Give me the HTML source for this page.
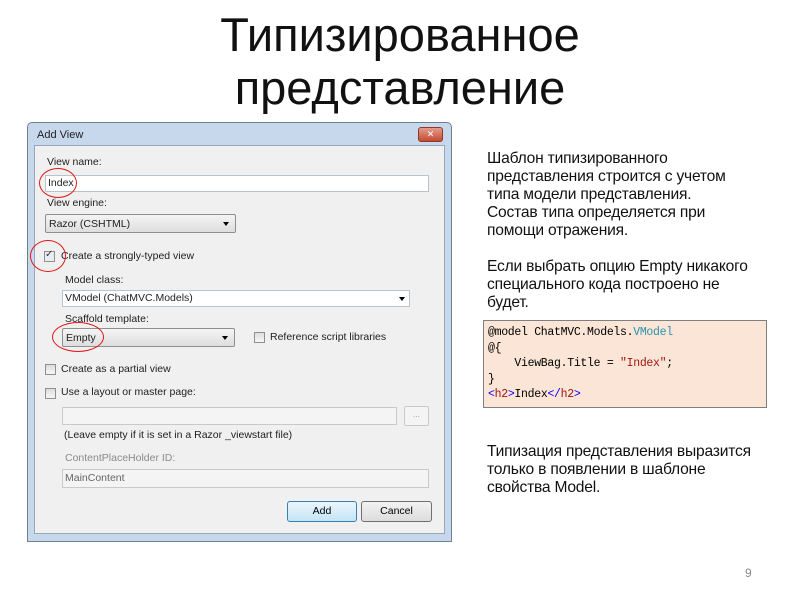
<!DOCTYPE html>
<html><head><meta charset="utf-8"><style>
body{margin:0;width:800px;height:600px;background:#fff;position:relative;overflow:hidden;font-family:"Liberation Sans","DejaVu Sans",sans-serif}
.a{position:absolute}
.t{font-size:15.6px;color:#111;line-height:18px;letter-spacing:-0.2px;white-space:nowrap}
.dlg{font-size:10.5px;color:#1e1e1e;white-space:nowrap}
.inp{background:#fff;border:1px solid #b9c3cc;box-sizing:border-box}
.cmb{background:linear-gradient(#f4f4f4,#dedede);border:1px solid #8e8f8f;border-radius:2px;box-sizing:border-box}
.arr{position:absolute;width:0;height:0;border-left:3px solid transparent;border-right:3px solid transparent;border-top:4px solid #000}
.cmb .arr{right:6px;top:7px}
.cb{width:11px;height:11px;border:1px solid #8f8f8f;background:linear-gradient(#ddd,#f6f6f6);box-sizing:border-box}
.circ{border:1.3px solid #e01818;border-radius:50%;box-sizing:border-box}
.btn{border:1px solid #707070;border-radius:3px;background:linear-gradient(#f2f2f2,#dcdcdc);box-sizing:border-box;text-align:center;font-size:10.5px;line-height:19px}
</style></head><body>
<div class="a" style="left:0;top:8px;width:800px;text-align:center;font-size:47px;line-height:53px;color:#111">Типизированное<br>представление</div>

<div class="a" style="left:27px;top:122px;width:425px;height:420px;background:#c7d8ec;border:1px solid #6d7f93;box-sizing:border-box;border-radius:5px 5px 0 0"></div>
<div class="a dlg" style="left:37px;top:129px;font-size:11px">Add View</div>
<div class="a" style="left:418px;top:127px;width:25px;height:15px;border-radius:3px;background:linear-gradient(#e59c8b,#c54a33);border:1px solid #8b3a2a;box-sizing:border-box;color:#fff;font-size:9px;text-align:center;line-height:13px">✕</div>
<div class="a" style="left:34px;top:145px;width:411px;height:389px;background:#f0f0f0;border:1px solid #98a8ba;box-sizing:border-box"></div>

<div class="a dlg" style="left:47px;top:156px">View name:</div>
<div class="a inp" style="left:45px;top:175px;width:384px;height:17px"></div>
<div class="a dlg" style="left:48px;top:177px">Index</div>
<div class="a circ" style="left:39px;top:168px;width:38px;height:30px"></div>
<div class="a dlg" style="left:47px;top:197px">View engine:</div>
<div class="a cmb" style="left:45px;top:214px;width:191px;height:19px"><span class="dlg" style="position:absolute;left:3px;top:3px">Razor (CSHTML)</span><i class="arr"></i></div>
<div class="a cb" style="left:44px;top:251px;background:#e8ecf2"></div>
<div class="a" style="left:45px;top:249px;font-size:10px;color:#333">✓</div>
<div class="a dlg" style="left:61px;top:250px">Create a strongly-typed view</div>
<div class="a circ" style="left:30px;top:240px;width:36px;height:32px"></div>
<div class="a dlg" style="left:65px;top:274px">Model class:</div>
<div class="a inp" style="left:62px;top:290px;width:348px;height:17px"></div>
<div class="a dlg" style="left:65px;top:292px">VModel (ChatMVC.Models)</div>
<i class="a arr" style="left:399px;top:297px"></i>
<div class="a dlg" style="left:65px;top:313px">Scaffold template:</div>
<div class="a cmb" style="left:62px;top:328px;width:173px;height:19px"><span class="dlg" style="position:absolute;left:3px;top:3px">Empty</span><i class="arr"></i></div>
<div class="a circ" style="left:52px;top:322px;width:52px;height:30px"></div>
<div class="a cb" style="left:254px;top:332px"></div>
<div class="a dlg" style="left:270px;top:331px">Reference script libraries</div>
<div class="a cb" style="left:45px;top:364px"></div>
<div class="a dlg" style="left:61px;top:363px">Create as a partial view</div>
<div class="a cb" style="left:45px;top:388px"></div>
<div class="a dlg" style="left:61px;top:386px">Use a layout or master page:</div>
<div class="a inp" style="left:62px;top:407px;width:335px;height:18px;background:#f4f4f4;border-color:#c9c9c9"></div>
<div class="a inp" style="left:404px;top:406px;width:25px;height:20px;background:#f4f4f4;border-color:#c9c9c9;border-radius:2px;font-size:8px;color:#999;text-align:center;line-height:16px">...</div>
<div class="a dlg" style="left:64px;top:429px">(Leave empty if it is set in a Razor _viewstart file)</div>
<div class="a dlg" style="left:65px;top:452px;color:#8a8a8a">ContentPlaceHolder ID:</div>
<div class="a inp" style="left:62px;top:469px;width:367px;height:19px;background:#f4f4f4;border-color:#c9c9c9"></div>
<div class="a dlg" style="left:65px;top:472px;color:#666">MainContent</div>
<div class="a btn" style="left:287px;top:501px;width:70px;height:21px;border-color:#3c7fb1;background:linear-gradient(#eaf6fd,#c4e5f6)">Add</div>
<div class="a btn" style="left:361px;top:501px;width:71px;height:21px">Cancel</div>

<div class="a t" style="left:487px;top:150px">Шаблон типизированного<br>представления строится с учетом<br>типа модели представления.<br>Состав типа определяется при<br>помощи отражения.<br><br>Если выбрать опцию Empty никакого<br>специального кода построено не<br>будет.</div>
<div class="a" style="left:483px;top:320px;width:284px;height:88px;background:#fbe5d6;border:1px solid #7f7f7f;box-sizing:border-box;font-family:'Liberation Mono',monospace;font-size:11.5px;letter-spacing:-0.3px;line-height:15.5px;padding:4px 0 0 4px;white-space:pre;color:#000">@model ChatMVC.Models.<span style="color:#2b91af">VModel</span>
@{
    ViewBag.Title = <span style="color:#a31515">"Index"</span>;
}
<span style="color:#00f">&lt;</span><span style="color:#a31515">h2</span><span style="color:#00f">&gt;</span>Index<span style="color:#00f">&lt;/</span><span style="color:#a31515">h2</span><span style="color:#00f">&gt;</span></div>
<div class="a t" style="left:487px;top:443px">Типизация представления выразится<br>только в появлении в шаблоне<br>свойства Model.</div>
<div class="a" style="left:745px;top:566px;font-size:12px;color:#888">9</div>
</body></html>
